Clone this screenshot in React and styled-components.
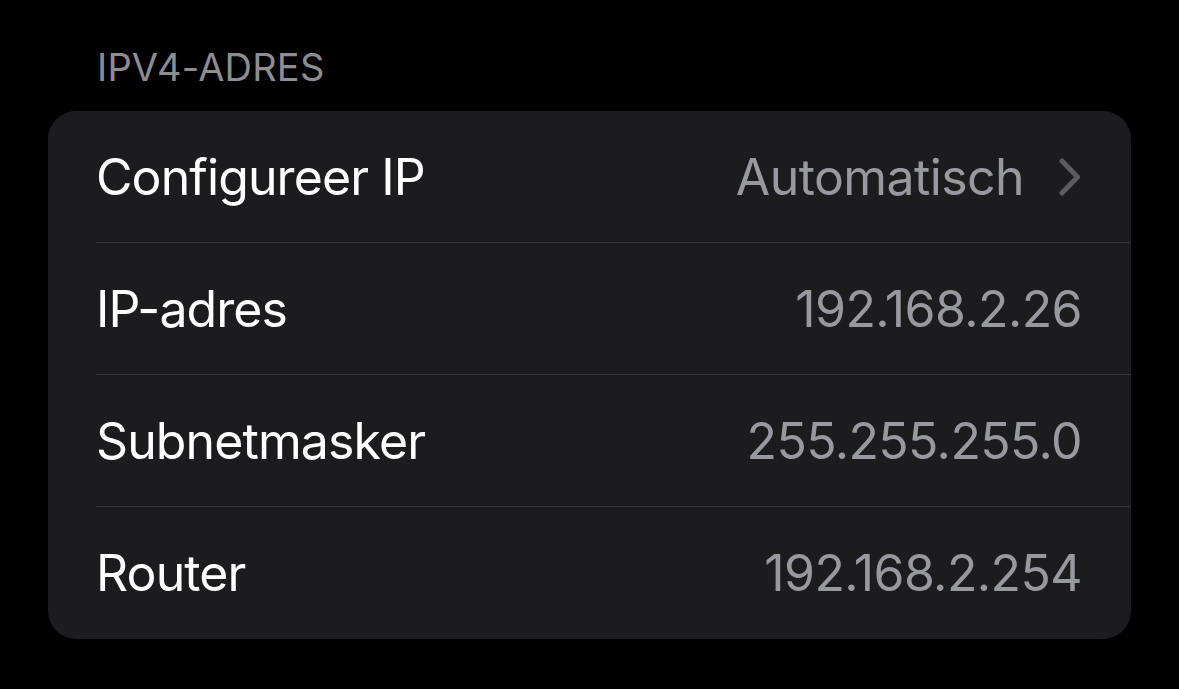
import React from "react";
import styled, { createGlobalStyle } from "styled-components";

const GlobalStyle = createGlobalStyle`
  html, body {
    margin: 0;
    background: #000;
  }
  body {
    font-family: Inter, "Noto Sans", "Liberation Sans", sans-serif;
    -webkit-font-smoothing: antialiased;
  }
`;

const Page = styled.div`
  width: 1179px;
  height: 689px;
  background: #000;
  padding: 43px 48px 0 48px;
  box-sizing: border-box;
`;

/* kop boven de groep */
const SectionHeader = styled.div`
  padding-left: 49px;
  font-size: 38px;
  line-height: 48px;
  color: #8d8d93;
  letter-spacing: 0.2px;
  margin-bottom: 20px;
`;

const Card = styled.div`
  background: #1c1c1e;
  border-radius: 28px;
  overflow: hidden;
`;

const Row = styled.div`
  display: flex;
  align-items: center;
  height: 132px;
  margin-left: 48px;
  padding-right: 49px;
  box-sizing: border-box;
  border-bottom: ${p => (p.$last ? "none" : "1px solid #38383a")};
`;

const Label = styled.span`
  font-size: 50px;
  color: #fff;
  letter-spacing: -0.9px;
`;

const Value = styled.span`
  margin-left: auto;
  font-size: 50px;
  color: #98989f;
  letter-spacing: -0.6px;
`;

const Chevron = styled.svg`
  margin-left: 34px;
  width: 24px;
  height: 38px;
  flex-shrink: 0;
`;

const rows = [
  { label: "Configureer IP", value: "Automatisch", link: true },
  { label: "IP-adres", value: "192.168.2.26" },
  { label: "Subnetmasker", value: "255.255.255.0" },
  { label: "Router", value: "192.168.2.254" },
];

export default function App() {
  return (
    <>
      <GlobalStyle />
      <Page>
        <SectionHeader>IPV4-ADRES</SectionHeader>
        <Card>
          {rows.map((r, i) => (
            <Row key={r.label} $last={i === rows.length - 1}>
              <Label>{r.label}</Label>
              <Value>{r.value}</Value>
              {r.link && (
                <Chevron viewBox="0 0 24 38" fill="none">
                  <path
                    d="M4 3 L19.5 19 L4 35"
                    stroke="#5b5b60"
                    strokeWidth="5"
                    strokeLinecap="round"
                    strokeLinejoin="round"
                  />
                </Chevron>
              )}
            </Row>
          ))}
        </Card>
      </Page>
    </>
  );
}
